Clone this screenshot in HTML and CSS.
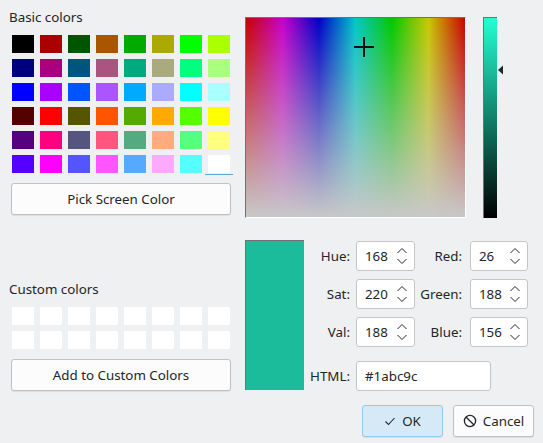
FILE: index.html
```html
<!DOCTYPE html>
<html>
<head>
<meta charset="utf-8">
<link rel="stylesheet" href="styles.css">
</head>
<body>
<div class="dialog">
  <div class="main">
    <div class="left">
      <div class="label">Basic colors</div>
      <div class="wells basic">
        <div class="cell"><span style="background:#000000"></span></div>
        <div class="cell"><span style="background:#aa0000"></span></div>
        <div class="cell"><span style="background:#005500"></span></div>
        <div class="cell"><span style="background:#aa5500"></span></div>
        <div class="cell"><span style="background:#00aa00"></span></div>
        <div class="cell"><span style="background:#aaaa00"></span></div>
        <div class="cell"><span style="background:#00ff00"></span></div>
        <div class="cell"><span style="background:#aaff00"></span></div>
        <div class="cell"><span style="background:#00007f"></span></div>
        <div class="cell"><span style="background:#aa007f"></span></div>
        <div class="cell"><span style="background:#00557f"></span></div>
        <div class="cell"><span style="background:#aa557f"></span></div>
        <div class="cell"><span style="background:#00aa7f"></span></div>
        <div class="cell"><span style="background:#aaaa7f"></span></div>
        <div class="cell"><span style="background:#00ff7f"></span></div>
        <div class="cell"><span style="background:#aaff7f"></span></div>
        <div class="cell"><span style="background:#0000ff"></span></div>
        <div class="cell"><span style="background:#aa00ff"></span></div>
        <div class="cell"><span style="background:#0055ff"></span></div>
        <div class="cell"><span style="background:#aa55ff"></span></div>
        <div class="cell"><span style="background:#00aaff"></span></div>
        <div class="cell"><span style="background:#aaaaff"></span></div>
        <div class="cell"><span style="background:#00ffff"></span></div>
        <div class="cell"><span style="background:#aaffff"></span></div>
        <div class="cell"><span style="background:#550000"></span></div>
        <div class="cell"><span style="background:#ff0000"></span></div>
        <div class="cell"><span style="background:#555500"></span></div>
        <div class="cell"><span style="background:#ff5500"></span></div>
        <div class="cell"><span style="background:#55aa00"></span></div>
        <div class="cell"><span style="background:#ffaa00"></span></div>
        <div class="cell"><span style="background:#55ff00"></span></div>
        <div class="cell"><span style="background:#ffff00"></span></div>
        <div class="cell"><span style="background:#55007f"></span></div>
        <div class="cell"><span style="background:#ff007f"></span></div>
        <div class="cell"><span style="background:#55557f"></span></div>
        <div class="cell"><span style="background:#ff557f"></span></div>
        <div class="cell"><span style="background:#55aa7f"></span></div>
        <div class="cell"><span style="background:#ffaa7f"></span></div>
        <div class="cell"><span style="background:#55ff7f"></span></div>
        <div class="cell"><span style="background:#ffff7f"></span></div>
        <div class="cell"><span style="background:#5500ff"></span></div>
        <div class="cell"><span style="background:#ff00ff"></span></div>
        <div class="cell"><span style="background:#5555ff"></span></div>
        <div class="cell"><span style="background:#ff55ff"></span></div>
        <div class="cell"><span style="background:#55aaff"></span></div>
        <div class="cell"><span style="background:#ffaaff"></span></div>
        <div class="cell"><span style="background:#55ffff"></span></div>
        <div class="cell selected"><span style="background:#ffffff"></span></div>
      </div>
      <button class="btn wide pick">Pick Screen Color</button>
      <div class="label custom-label">Custom colors</div>
      <div class="wells custom">
        <div class="cell"><span></span></div><div class="cell"><span></span></div>
        <div class="cell"><span></span></div><div class="cell"><span></span></div>
        <div class="cell"><span></span></div><div class="cell"><span></span></div>
        <div class="cell"><span></span></div><div class="cell"><span></span></div>
        <div class="cell"><span></span></div><div class="cell"><span></span></div>
        <div class="cell"><span></span></div><div class="cell"><span></span></div>
        <div class="cell"><span></span></div><div class="cell"><span></span></div>
        <div class="cell"><span></span></div><div class="cell"><span></span></div>
      </div>
      <button class="btn wide add">Add to Custom Colors</button>
    </div>
    <div class="right">
      <div class="pickers">
        <div class="picker">
          <svg class="cross" width="22" height="22" viewBox="0 0 22 22"><path d="M1 11H21M11 1V21" stroke="#111" stroke-width="2"/></svg>
        </div>
        <div class="lum">
          <div class="lum-bar"></div>
          <svg class="lum-arrow" width="6" height="10" viewBox="0 0 6 10"><path d="M0 5L5 0.5V9.5Z" fill="#232629"/></svg>
        </div>
      </div>
      <div class="values">
        <div class="current"></div>
        <div class="fields">
          <label class="flabel">Hue:</label>
          <div class="spin"><span>168</span><svg width="12" height="22" viewBox="0 0 12 22"><path d="M1.5 8L6 3.5L10.5 8M1.5 14L6 18.5L10.5 14" fill="none" stroke="#232629" stroke-width="1"/></svg></div>
          <label class="flabel">Red:</label>
          <div class="spin"><span>26</span><svg width="12" height="22" viewBox="0 0 12 22"><path d="M1.5 8L6 3.5L10.5 8M1.5 14L6 18.5L10.5 14" fill="none" stroke="#232629" stroke-width="1"/></svg></div>
          <label class="flabel">Sat:</label>
          <div class="spin"><span>220</span><svg width="12" height="22" viewBox="0 0 12 22"><path d="M1.5 8L6 3.5L10.5 8M1.5 14L6 18.5L10.5 14" fill="none" stroke="#232629" stroke-width="1"/></svg></div>
          <label class="flabel">Green:</label>
          <div class="spin"><span>188</span><svg width="12" height="22" viewBox="0 0 12 22"><path d="M1.5 8L6 3.5L10.5 8M1.5 14L6 18.5L10.5 14" fill="none" stroke="#232629" stroke-width="1"/></svg></div>
          <label class="flabel">Val:</label>
          <div class="spin"><span>188</span><svg width="12" height="22" viewBox="0 0 12 22"><path d="M1.5 8L6 3.5L10.5 8M1.5 14L6 18.5L10.5 14" fill="none" stroke="#232629" stroke-width="1"/></svg></div>
          <label class="flabel">Blue:</label>
          <div class="spin"><span>156</span><svg width="12" height="22" viewBox="0 0 12 22"><path d="M1.5 8L6 3.5L10.5 8M1.5 14L6 18.5L10.5 14" fill="none" stroke="#232629" stroke-width="1"/></svg></div>
          <label class="flabel html-label">HTML:</label>
          <div class="html-field">#1abc9c</div>
        </div>
      </div>
    </div>
  </div>
  <div class="buttons">
    <button class="btn dlg ok"><svg width="12" height="12" viewBox="0 0 12 12"><path d="M1.5 6.5L4.5 9.5L10.5 3" fill="none" stroke="#232629" stroke-width="1.1"/></svg>OK</button>
    <button class="btn dlg cancel"><svg width="14" height="14" viewBox="0 0 14 14"><circle cx="7" cy="7" r="5.6" fill="none" stroke="#232629" stroke-width="1.3"/><path d="M3 3L11 11" stroke="#232629" stroke-width="1.3"/></svg>Cancel</button>
  </div>
</div>
</body>
</html>
```
FILE: styles.css
```css
html, body {
  margin: 0;
  padding: 0;
}
body {
  width: 543px;
  height: 443px;
  background: #eff0f1;
  font-family: "Noto Sans", "DejaVu Sans", sans-serif;
  font-size: 13.333px;
  color: #232629;
  overflow: hidden;
}
.dialog {
  padding: 8px 9px 0 9px;
  display: flex;
  flex-direction: column;
}
.main {
  display: flex;
}
.left {
  width: 224px;
  display: flex;
  flex-direction: column;
}
.label {
  height: 24px;
  line-height: 18px;
}
.custom-label {
  margin-top: 65px;
}
.wells {
  display: grid;
  grid-template-columns: repeat(8, 28px);
  grid-auto-rows: 24px;
}
.cell {
  position: relative;
  padding: 3px 3px 3px 3px;
}
.cell span {
  display: block;
  width: 22px;
  height: 18px;
  background: #ffffff;
}
.cell.selected::after {
  content: "";
  position: absolute;
  left: 0;
  right: 0;
  bottom: 1px;
  height: 1px;
  background: #5aa9dc;
}
.btn {
  font-family: inherit;
  font-size: 13.333px;
  color: #232629;
  background: #fcfcfc;
  border: 1px solid #bfc1c3;
  border-radius: 3px;
  box-shadow: 0 1px 1px rgba(0,0,0,0.08);
  padding: 0;
  height: 32px;
}
.wide {
  width: 220px;
  margin-left: 2px;
  margin-top: 7px;
}
.right {
  margin-left: 12px;
  display: flex;
  flex-direction: column;
}
.pickers {
  display: flex;
  margin-top: 9px;
  height: 201px;
}
.picker {
  position: relative;
  width: 220px;
  height: 200px;
  border-top: 1px solid #6f7173;
  border-left: 1px solid #6f7173;
  border-right: 1px solid #ffffff;
  border-bottom: 1px solid #ffffff;
  box-sizing: border-box;
  width: 221px;
  height: 201px;
  background:
    linear-gradient(to bottom, rgba(200,200,200,0), rgb(200,200,200)),
    linear-gradient(to right, #c80000, #c800c8 16.667%, #0000c8 33.333%, #00c8c8 50%, #00c800 66.667%, #c8c800 83.333%, #c80000);
}
.cross {
  position: absolute;
  left: 107px;
  top: 18px;
}
.lum {
  position: relative;
  margin-left: 17px;
  width: 20px;
}
.lum-bar {
  width: 14px;
  height: 201px;
  box-sizing: border-box;
  border-top: 1px solid #6f7173;
  border-left: 1px solid #6f7173;
  background: linear-gradient(to bottom, rgb(35,255,211), #000000);
}
.lum-arrow {
  position: absolute;
  left: 15px;
  top: 48px;
}
.values {
  display: flex;
  margin-top: 22px;
}
.current {
  width: 59px;
  height: 150px;
  box-sizing: border-box;
  border-top: 1px solid #6f7173;
  border-left: 1px solid #6f7173;
  background: #1abc9c;
}
.fields {
  margin-top: 1px;
  display: grid;
  grid-template-columns: 52px 59px 55px 58px;
  grid-template-rows: 30px 30px 30px 30px;
  row-gap: 8px;
}
.flabel {
  text-align: right;
  line-height: 30px;
  padding-right: 6px;
}
.fields .flabel:nth-child(3),
.fields .flabel:nth-child(7),
.fields .flabel:nth-child(11) {
  padding-right: 8px;
}
.html-label {
  margin-top: 6px;
}
.spin {
  background: #ffffff;
  border: 1px solid #c3c5c7;
  border-radius: 3px;
  display: flex;
  align-items: center;
  justify-content: space-between;
  padding: 0 6px 0 8px;
  box-sizing: border-box;
  height: 30px;
}
.html-field {
  grid-column: 2 / 5;
  margin-top: 6px;
  width: 135px;
  height: 30px;
  box-sizing: border-box;
  background: #ffffff;
  border: 1px solid #c3c5c7;
  border-radius: 3px;
  padding-left: 8px;
  line-height: 28px;
}
.buttons {
  display: flex;
  justify-content: flex-end;
  gap: 10px;
  margin-top: 14px;
}
.dlg {
  width: 81px;
  height: 32px;
  display: flex;
  align-items: center;
  justify-content: center;
  gap: 6px;
}
.ok {
  background: #d5eaf6;
  border-color: #93cbe8;
}
```
